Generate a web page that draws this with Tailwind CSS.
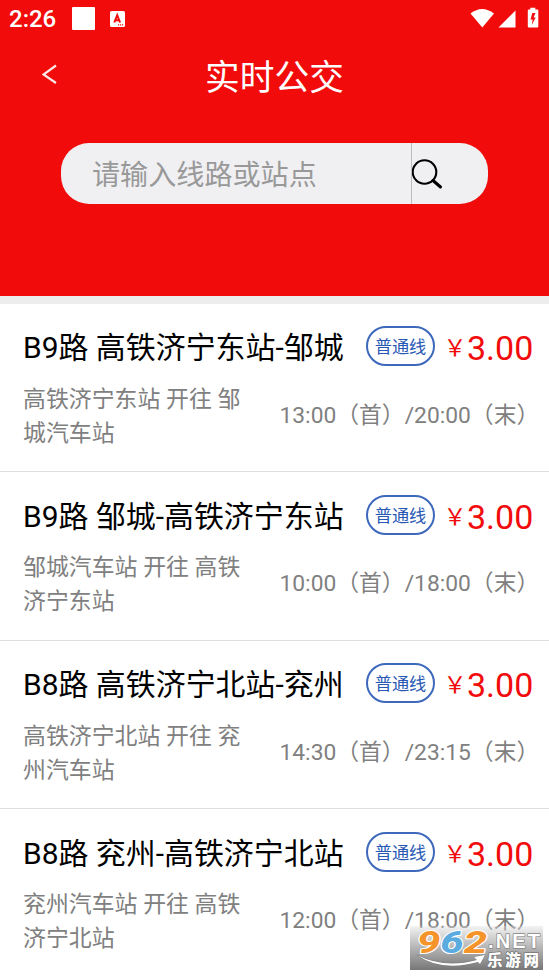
<!DOCTYPE html>
<html lang="zh-CN">
<head>
<meta charset="utf-8">
<title>实时公交</title>
<script src="https://cdn.jsdelivr.net/npm/@tailwindcss/browser@4"></script>
</head>
<body class="h-[976px] overflow-hidden bg-white font-[Roboto,'Noto_Sans_CJK_SC',sans-serif]">
<div class="relative h-[976px] w-[549px] overflow-hidden">
  <header class="h-[296px] bg-[#f10b0b] text-white">
    <div class="flex h-[38px] items-center pr-[10px] pl-[9px]">
      <span class="w-[63px] text-[24px] leading-[38px] font-medium">2:26</span>
      <span class="mt-[-1px] h-[23px] w-[23px] rounded-[1px] bg-white"></span>
      <svg class="ml-[15px] h-[16px] w-[15px]" viewBox="0 0 15 16"><rect width="15" height="16" rx="1.5" fill="#fff"/><path d="M4.3 11.5 7.2 4.2l2.9 7.3M5.4 9.2h3.6" fill="none" stroke="#f10b0b" stroke-width="2"/><path d="M8 13.3h1.2v1.2H8zM10 13.3h1.2v1.2H10zM12 13.3h1.2v1.2H12z" fill="#f10b0b"/></svg>
      <svg class="ml-auto h-[30px] w-[70px]" viewBox="469 4 70 30" fill="#fff"><path d="M470.5 13.5Q482 4.5 494 13.5L482.3 27.5Z"/><path d="M515.5 10.5V27.5H498.5Z"/><path fill-rule="evenodd" d="M530.3 7.8h5v1.7h2q1 0 1 1V26.500q0 1-1 1h-8.500q-1 0-1-1V10.500q0-1 1-1h1.500zM532.300 13l-1.800 6.500h2.200l-1 5.500 4-7.600h-2.200l2-4.400z"/></svg>
    </div>
    <div class="relative flex h-[76px] items-center justify-center">
      <svg class="absolute top-[26px] left-[42px] h-[21px] w-[16px]" viewBox="0 0 16 21"><path d="M14 1.500 1.500 10.500 14 19" fill="none" stroke="#fff" stroke-opacity=".9" stroke-width="2.200"/></svg>
      <h1 class="pt-[4px] text-[34.700px] leading-[40px] font-normal">实时公交</h1>
    </div>
    <div class="mt-[29px] ml-[61px] flex h-[61px] w-[427px] overflow-hidden rounded-[28px] bg-[#f0f0f3]">
      <div class="w-[351px] border-r border-[#bcbcc0] pt-[2px] pl-[31px] text-[28.100px] leading-[61px] font-normal text-[#999]">请输入线路或站点</div>
      <svg class="mt-[15px] h-[32px] w-[32px]" viewBox="0 0 32 32" fill="none" stroke="#000"><circle cx="12.500" cy="14" r="11.800" stroke-width="2.100"/><path d="m21 22.500 7.500 6.500" stroke-width="3" stroke-linecap="round"/></svg>
    </div>
  </header>
  <div class="h-[7.500px] bg-[#ededed]"></div>
  <main id="routes"></main>
  <div class="absolute top-[926px] left-[410px] h-[44px] w-[133px] bg-linear-to-b from-[#e2e2e2]/40 to-[#777]">
    <svg class="h-[44px] w-[133px] overflow-visible" viewBox="0 0 133 44" font-family="Liberation Sans, Noto Sans CJK SC, sans-serif" font-weight="700" paint-order="stroke" stroke-linejoin="round">
      <text x="7" y="27" font-size="32" font-family="Roboto, sans-serif" font-weight="800" font-style="italic" stroke="#fff" stroke-width="2" textLength="70" lengthAdjust="spacingAndGlyphs"><tspan fill="#f5942b">9</tspan><tspan fill="#5aace0">6</tspan><tspan fill="#f5942b">2</tspan></text>
      <text x="78" y="21.500" font-size="20" fill="#fff" stroke="#888" stroke-width="1.500" textLength="52">.NET</text>
      <text x="77" y="39.500" font-size="15.500" font-weight="900" fill="#fff" stroke="#777" stroke-width="1.500" textLength="52">乐游网</text>
      <path d="M7 29Q34 43 67 34L64 31 75 29 70 38 68 36Q31 46 7 29Z" fill="#fff" stroke="#777" stroke-width=".7"/>
    </svg>
  </div>
</div>
<template id="row">
  <section class="h-[168.500px] border-b-[1.500px] border-[#dedede] pl-[23px]">
    <div class="flex h-[79px] items-center pt-[5px]">
      <h2 data-title class="w-[343px] pt-[5px] whitespace-nowrap text-[29.950px] leading-[44px] font-normal text-black"></h2>
      <span class="mt-[1px] flex h-[40px] w-[69px] items-center justify-center rounded-full border-2 border-[#2858b4]/90 pt-[4px] text-[17.200px] font-normal text-[#2858b4]">普通线</span>
      <span class="ml-[8px] flex items-start pt-[5px] text-[#f10b0b]"><span class="w-[24px] text-center font-['Noto_Sans_CJK_SC'] text-[23px] leading-[36px] font-normal">￥</span><span class="text-[34px] leading-[40px]">3.00</span></span>
    </div>
    <div class="flex text-[22.900px] font-normal text-[#808080]">
      <p data-path class="w-[256.500px] leading-[34.300px]"></p>
      <p data-time class="whitespace-nowrap pt-[16px] text-[22.800px] leading-[34px]"></p>
    </div>
  </section>
</template>
<script>
const routes = [
  ["B9路 高铁济宁东站-邹城", "高铁济宁东站 开往 邹", "城汽车站", "13:00（首）/20:00（末）"],
  ["B9路 邹城-高铁济宁东站", "邹城汽车站 开往 高铁", "济宁东站", "10:00（首）/18:00（末）"],
  ["B8路 高铁济宁北站-兖州", "高铁济宁北站 开往 兖", "州汽车站", "14:30（首）/23:15（末）"],
  ["B8路 兖州-高铁济宁北站", "兖州汽车站 开往 高铁", "济宁北站", "12:00（首）/18:00（末）"]
];
for (const [title, a, b, time] of routes) {
  const row = document.getElementById("row").content.cloneNode(true);
  row.querySelector("[data-title]").textContent = title;
  row.querySelector("[data-path]").append(a, document.createElement("br"), b);
  row.querySelector("[data-time]").textContent = time;
  document.getElementById("routes").append(row);
}
</script>
</body>
</html>
